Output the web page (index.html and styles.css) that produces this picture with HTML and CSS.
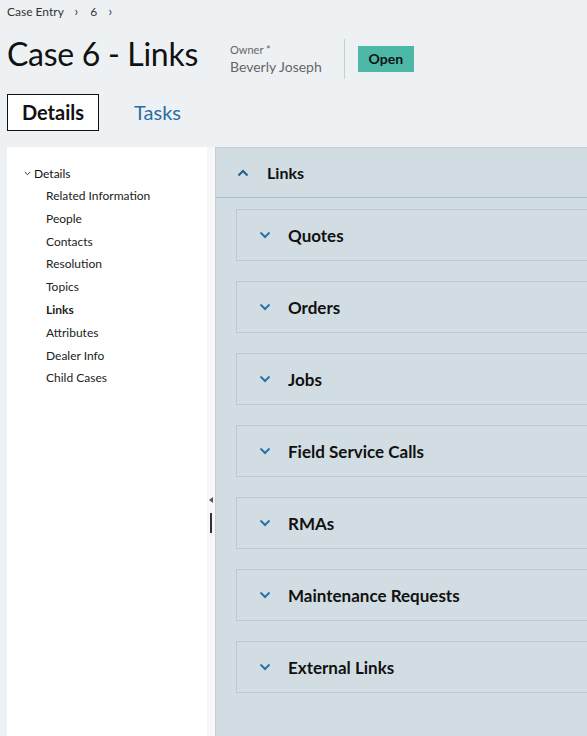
FILE: index.html
```html
<!DOCTYPE html>
<html lang="en">
<head>
    <meta charset="UTF-8">
    <title>Case 6 - Links</title>
    <link rel="stylesheet" href="styles.css">
</head>
<body>
    <div class="breadcrumb">
        <span>Case Entry</span>
        <span class="sep">&rsaquo;</span>
        <span>6</span>
        <span class="sep">&rsaquo;</span>
    </div>

    <div class="page-header">
        <h1 class="title">Case 6 - Links</h1>
        <div class="owner">
            <div class="owner-label">Owner *</div>
            <div class="owner-name">Beverly Joseph</div>
        </div>
        <div class="divider"></div>
        <div class="status">Open</div>
    </div>

    <div class="tabs">
        <div class="tab active">Details</div>
        <div class="tab">Tasks</div>
    </div>

    <div class="workspace">
        <nav class="sidenav">
            <div class="nav-group">
                <svg width="7" height="5" viewBox="0 0 7 5"><path d="M0.8 1 L3.5 3.7 L6.2 1" fill="none" stroke="#333" stroke-width="1"/></svg>
                <span>Details</span>
            </div>
            <ul class="nav-list">
                <li>Related Information</li>
                <li>People</li>
                <li>Contacts</li>
                <li>Resolution</li>
                <li>Topics</li>
                <li class="current">Links</li>
                <li>Attributes</li>
                <li>Dealer Info</li>
                <li>Child Cases</li>
            </ul>
        </nav>

        <div class="splitter">
            <span class="splitter-arrow"></span>
            <span class="splitter-grip"></span>
        </div>

        <main class="content">
            <div class="section-head">
                <svg class="chev" width="12" height="8" viewBox="0 0 12 8"><path d="M1.5 6.5 L6 2 L10.5 6.5" fill="none" stroke="#1f5f8f" stroke-width="2"/></svg>
                <span>Links</span>
            </div>
            <div class="panels">
                <div class="panel"><svg class="chev" width="12" height="8" viewBox="0 0 12 8"><path d="M1.5 1.5 L6 6 L10.5 1.5" fill="none" stroke="#2a73a8" stroke-width="2"/></svg><span>Quotes</span></div>
                <div class="panel"><svg class="chev" width="12" height="8" viewBox="0 0 12 8"><path d="M1.5 1.5 L6 6 L10.5 1.5" fill="none" stroke="#2a73a8" stroke-width="2"/></svg><span>Orders</span></div>
                <div class="panel"><svg class="chev" width="12" height="8" viewBox="0 0 12 8"><path d="M1.5 1.5 L6 6 L10.5 1.5" fill="none" stroke="#2a73a8" stroke-width="2"/></svg><span>Jobs</span></div>
                <div class="panel"><svg class="chev" width="12" height="8" viewBox="0 0 12 8"><path d="M1.5 1.5 L6 6 L10.5 1.5" fill="none" stroke="#2a73a8" stroke-width="2"/></svg><span>Field Service Calls</span></div>
                <div class="panel"><svg class="chev" width="12" height="8" viewBox="0 0 12 8"><path d="M1.5 1.5 L6 6 L10.5 1.5" fill="none" stroke="#2a73a8" stroke-width="2"/></svg><span>RMAs</span></div>
                <div class="panel"><svg class="chev" width="12" height="8" viewBox="0 0 12 8"><path d="M1.5 1.5 L6 6 L10.5 1.5" fill="none" stroke="#2a73a8" stroke-width="2"/></svg><span>Maintenance Requests</span></div>
                <div class="panel"><svg class="chev" width="12" height="8" viewBox="0 0 12 8"><path d="M1.5 1.5 L6 6 L10.5 1.5" fill="none" stroke="#2a73a8" stroke-width="2"/></svg><span>External Links</span></div>
            </div>
        </main>
    </div>
</body>
</html>
```

FILE: styles.css
```css
html, body {
    margin: 0;
    height: 100%;
    overflow: hidden;
}
body {
    font-family: 'Lato', 'Liberation Sans', sans-serif;
    background-color: #eef1f4;
    color: #111;
    padding-left: 7px;
    box-sizing: border-box;
}
.breadcrumb {
    font-size: 12px;
    color: #333;
    height: 22px;
    line-height: 22px;
}
.breadcrumb .sep {
    margin: 0 9px 0 8px;
    font-size: 13px;
}
.page-header {
    display: flex;
    align-items: center;
    height: 62px;
}
.title {
    margin: 0;
    font-size: 32px;
    font-weight: normal;
    width: 223px;
    letter-spacing: -0.3px;
}
.owner,
.divider,
.status {
    margin-top: 12px;
}
.owner {
    color: #666;
}
.owner-label {
    font-size: 11px;
    margin-bottom: 2px;
}
.owner-name {
    font-size: 14px;
}
.divider {
    width: 1px;
    height: 40px;
    background-color: #c9ced3;
    margin-left: 22px;
    margin-right: 13px;
}
.status {
    background-color: #4db8a8;
    font-size: 14px;
    font-weight: bold;
    width: 56px;
    height: 26px;
    line-height: 26px;
    text-align: center;
}
.tabs {
    display: flex;
    align-items: center;
    margin-top: 10px;
    height: 37px;
}
.tab {
    font-size: 20px;
    color: #2a6ea6;
    padding: 0 15px;
    margin-right: 20px;
    height: 37px;
    line-height: 37px;
    box-sizing: border-box;
}
.tab.active {
    background-color: #fff;
    color: #111;
    font-weight: bold;
    border: 1px solid #111;
    line-height: 35px;
    width: 92px;
    text-align: center;
    padding: 0;
}
.workspace {
    display: flex;
    margin-top: 16px;
    height: 600px;
}
.sidenav {
    width: 200px;
    background-color: #fff;
    font-size: 12px;
    padding-top: 18px;
    box-sizing: border-box;
}
.nav-group {
    display: flex;
    align-items: center;
    padding-left: 17px;
    height: 16px;
}
.nav-group svg {
    margin-right: 3px;
}
.nav-list {
    list-style: none;
    margin: 4px 0 0;
    padding: 0 0 0 39px;
}
.nav-list li {
    height: 22.8px;
    line-height: 22.8px;
    color: #222;
}
.nav-list li.current {
    font-weight: bold;
}
.splitter {
    width: 8px;
    background-color: #f7f7f7;
    display: flex;
    flex-direction: column;
    align-items: center;
    padding-top: 350px;
    box-sizing: border-box;
}
.splitter-arrow {
    width: 0;
    height: 0;
    border-top: 3px solid transparent;
    border-bottom: 3px solid transparent;
    border-right: 4px solid #555;
    margin-bottom: 10px;
}
.splitter-grip {
    width: 2px;
    height: 20px;
    background-color: #333;
}
.content {
    flex: 1;
    background-color: #d1dde2;
    border-left: 1px solid #c3d0d6;
    border-top: 1px solid #c3d0d6;
}
.section-head {
    display: flex;
    align-items: center;
    height: 49px;
    border-bottom: 1px solid #a9bec7;
    padding-left: 21px;
    font-size: 16px;
    font-weight: bold;
}
.section-head .chev {
    margin-right: 18px;
}
.panels {
    display: flex;
    flex-direction: column;
    gap: 20px;
    padding: 11px 0 0 20px;
}
.panel {
    display: flex;
    align-items: center;
    height: 50px;
    border: 1px solid #bccbd2;
    border-right: 0;
    padding-left: 22px;
    font-size: 17px;
    font-weight: bold;
}
.panel .chev {
    margin-right: 17px;
}
```
